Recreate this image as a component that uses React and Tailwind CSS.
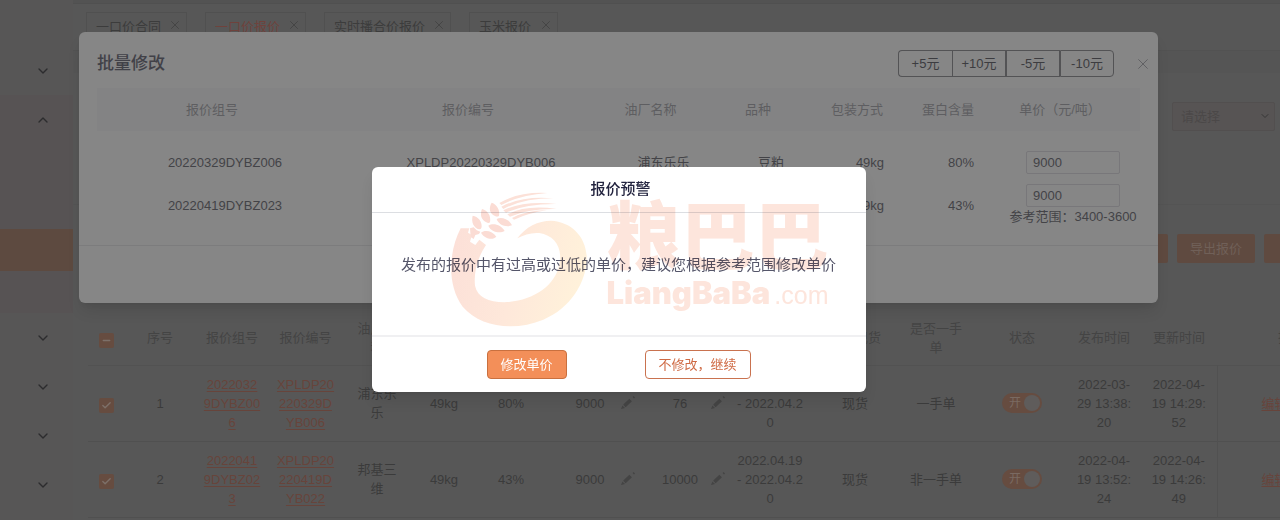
import { Fragment } from "react";
import { Check, ChevronDown, ChevronUp, Minus, X } from "lucide-react";

const tabs = [
  { name: "一口价合同", width: "w-[101px]" },
  { name: "一口价报价", width: "w-[101px]", active: true },
  { name: "实时播合价报价", width: "w-[127px]" },
  { name: "玉米报价", width: "w-[89px]" },
];

const columns = [
  { title: ["序号"], width: "w-[72px]" },
  { title: ["报价组号"], width: "w-[72px]" },
  { title: ["报价编号"], width: "w-[75px]" },
  { title: ["油厂名", "称"], width: "w-[68px]" },
  { title: ["包装方式"], width: "w-[66px]" },
  { title: ["蛋白含量"], width: "w-[68px]" },
  { title: ["单价"], width: "w-[90px]" },
  { title: ["数量"], width: "w-[90px]" },
  { title: ["提货时间"], width: "w-[90px]" },
  { title: ["是否现货"], width: "w-[80px]" },
  { title: ["是否一手", "单"], width: "w-[82px]" },
  { title: ["状态"], width: "w-[90px]" },
  { title: ["发布时间"], width: "w-[74px]" },
  { title: ["更新时间"], width: "w-[76px]" },
];

const quotes = [
  {
    id: 1,
    group: ["2022032", "9DYBZ00", "6"],
    code: ["XPLDP20", "220329D", "YB006"],
    factory: ["浦东乐", "乐"],
    pack: "49kg",
    protein: "80%",
    price: "9000",
    amount: "76",
    pickup: ["2022.04.19", "- 2022.04.2", "0"],
    spot: "现货",
    first: "一手单",
    published: ["2022-03-", "29 13:38:", "20"],
    updated: ["2022-04-", "19 14:29:", "52"],
  },
  {
    id: 2,
    group: ["2022041", "9DYBZ02", "3"],
    code: ["XPLDP20", "220419D", "YB022"],
    factory: ["邦基三", "维"],
    pack: "49kg",
    protein: "43%",
    price: "9000",
    amount: "10000",
    pickup: ["2022.04.19", "- 2022.04.2", "0"],
    spot: "现货",
    first: "非一手单",
    published: ["2022-04-", "19 13:52:", "24"],
    updated: ["2022-04-", "19 14:26:", "49"],
  },
];

const batchColumns = [
  { title: "报价组号", width: "w-[256px]" },
  { title: "报价编号", width: "w-[256px]" },
  { title: "油厂名称", width: "w-[109px]" },
  { title: "品种", width: "w-[106px]" },
  { title: "包装方式", width: "w-[92px]" },
  { title: "蛋白含量", width: "w-[90px]" },
  { title: "单价（元/吨）", width: "w-[134px]" },
];

const batchRows = [
  { cells: ["20220329DYBZ006", "XPLDP20220329DYB006", "浦东乐乐", "豆粕", "49kg", "80%"], price: "9000" },
  { cells: ["20220419DYBZ023", "XPLDP20220419DYB022", "邦基三维", "豆粕", "49kg", "43%"], price: "9000", range: "3400-3600" },
];

function Lines({ text }) {
  return text.map((line, i) => (
    <Fragment key={i}>
      {i > 0 && <br />}
      {line}
    </Fragment>
  ));
}

function Pencil() {
  return (
    <svg viewBox="0 0 14 14" className="h-[14px] w-[14px] shrink-0" fill="currentColor">
      <path d="M0 13l1.4-3.6 2.6 2.6zM2.1 8.7l6.2-6 2.6 2.6-6.2 6zM11.6 1l1-1 1.4 1.4-1 1z" />
    </svg>
  );
}

function TickBox({ label, partial }) {
  const Icon = partial ? Minus : Check;
  return (
    <label className="relative mt-1 inline-block h-[15px] w-[15px] align-middle">
      <input type="checkbox" aria-label={label} defaultChecked className="block h-[15px] w-[15px] appearance-none rounded-xs bg-[#664c40]" />
      <Icon className="pointer-events-none absolute inset-0 m-auto h-[11px] w-[11px] text-[#7d7069]" strokeWidth={3} />
    </label>
  );
}

function EditableCell({ value }) {
  return (
    <td>
      <div className="flex items-center pl-[14px]">
        <span className="flex-1">{value}</span>
        <button aria-label="修改" className="text-[#444444]">
          <Pencil />
        </button>
      </div>
    </td>
  );
}

function Sidebar() {
  return (
    <nav className="w-[73px] shrink-0 bg-[#575656] pt-[46px] text-[#2c2c2e]">
      <MenuItem label="展开" />
      <div className="bg-[#575354]">
        <MenuItem label="收起" open />
        <ul>
          <li className="h-[43px]"></li>
          <li className="h-[42px]"></li>
          <li className="h-[42px] bg-[#5d4a40]"></li>
          <li className="h-[42px]"></li>
        </ul>
      </div>
      <MenuItem label="展开" />
      <MenuItem label="展开" />
      <MenuItem label="展开" />
      <MenuItem label="展开" />
    </nav>
  );
}

function MenuItem({ label, open }) {
  const Icon = open ? ChevronUp : ChevronDown;
  return (
    <button aria-label={label} className="flex h-[49px] w-full items-center justify-end pr-[22px]">
      <Icon size={16} strokeWidth={2} />
    </button>
  );
}

function QuoteTable() {
  return (
    <div className="overflow-hidden pl-[15px]">
      <table className="w-full min-w-[1277px] table-fixed text-center text-[13px] leading-[19px] text-[#3b3b3b]">
        <thead>
          <tr className="h-[54px] border-b border-[#525252] text-[#444444]">
            <th className="w-[36px] font-normal">
              <TickBox label="全选" partial />
            </th>
            {columns.map((col) => (
              <th key={col.title[0]} className={`${col.width} font-normal`}>
                <Lines text={col.title} />
              </th>
            ))}
            <th className="w-[148px] font-normal">操作</th>
          </tr>
        </thead>
        <tbody>
          {quotes.map((quote) => (
            <tr key={quote.id} className="h-[76px] border-b border-[#505050]">
              <td>
                <TickBox label={`选择 ${quote.id}`} />
              </td>
              <td>{quote.id}</td>
              <td>
                <a href="#" className="text-[#67443b] underline underline-offset-2"><Lines text={quote.group} /></a>
              </td>
              <td>
                <a href="#" className="text-[#67443b] underline underline-offset-2"><Lines text={quote.code} /></a>
              </td>
              <td><Lines text={quote.factory} /></td>
              <td>{quote.pack}</td>
              <td>{quote.protein}</td>
              <EditableCell value={quote.price} />
              <EditableCell value={quote.amount} />
              <td><Lines text={quote.pickup} /></td>
              <td>{quote.spot}</td>
              <td>{quote.first}</td>
              <td>
                <button role="switch" aria-checked="true" className="inline-flex h-5 w-10 items-center justify-between rounded-full bg-[#664c40] pr-[2px] pl-[7px] align-middle text-xs text-[#7a6a62]">
                  开
                  <span className="h-4 w-4 rounded-full bg-[#5f5c5b]"></span>
                </button>
              </td>
              <td><Lines text={quote.published} /></td>
              <td><Lines text={quote.updated} /></td>
              <td className="border-l border-[#515151] pl-[44px] text-left">
                <a href="#" className="text-[#67443b] underline underline-offset-2">编辑</a>
              </td>
            </tr>
          ))}
        </tbody>
      </table>
    </div>
  );
}

function Watermark() {
  return (
    <div className="pointer-events-none absolute top-[18px] left-[68px] flex mix-blend-multiply">
      <svg viewBox="0 0 480 450" className="h-[150px] w-[160px]">
        <defs>
          <linearGradient id="grain" x1="0" y1="0.3" x2="1" y2="0.5">
            <stop offset="0" stopColor="#fce0d8" />
            <stop offset="0.5" stopColor="#fee8da" />
            <stop offset="1" stopColor="#fff2da" />
          </linearGradient>
        </defs>
        <path
          fill="url(#grain)"
          d="M62 130L88 130L84 143L96 150L90 170L106 180L118 164L138 180C112 218 101 262 105 302C113 340 152 354 207 351C282 344 346 302 358 238C369 187 343 151 298 144C274 142 252 149 232 160C256 126 295 107 333 107C393 110 436 153 440 212C443 288 393 370 310 404C225 439 122 428 68 365C21 301 25 202 62 130Z"
        />
        <g fill="#fbdcd4">
          <path d="M98 92C114 95 126 108 125 126Q124 134 117 133C101 128 93 112 98 92Z" />
          <path d="M126 72C143 77 154 92 150 112Q146 116 139 112C124 105 119 89 126 72Z" />
          <path d="M155 53C171 58 181 76 177 92Q173 97 165 93C149 86 145 70 155 53Z" />
          <path d="M123 143C134 133 158 137 169 155C160 165 135 164 123 143Z" />
          <path d="M145 122C160 112 184 120 194 138C180 146 153 142 145 122Z" />
          <path d="M170 102C186 94 208 104 216 121C200 128 176 121 170 102Z" />
          <path d="M90 130L101 127L110 136L121 140L117 147L106 150L101 162L92 156Z" />
        </g>
        <g fill="#fce1d8">
          <path d="M178 54Q235 20 322 24Q240 30 184 60Z" />
          <path d="M184 65Q250 31 340 40Q250 40 190 72Z" />
          <path d="M190 76Q252 46 350 57Q256 56 198 83Z" />
          <path d="M202 88Q260 58 350 72Q266 70 210 95Z" />
          <path d="M216 99Q262 75 320 76Q266 84 222 104Z" />
        </g>
      </svg>
      <div className="pl-[7px] text-[#fde5dc]">
        <div className="pt-1 font-['Noto_Sans_CJK_SC',sans-serif] text-[74px] leading-[84px] font-black">粮巴巴</div>
        <div className="flex items-baseline gap-1 leading-10">
          <span className="font-['Inter',sans-serif] text-[31px] font-black">LiangBaBa</span>
          <span className="font-['Liberation_Sans',sans-serif] text-[25px]">.com</span>
        </div>
      </div>
    </div>
  );
}

function PriceWarning() {
  return (
    <div role="alertdialog" aria-labelledby="warning-title" className="absolute top-[135px] left-1/2 w-[494px] -translate-x-1/2 rounded-md bg-white shadow-lg">
      <h2 id="warning-title" className="border-b border-[#dcdee2] pb-[2px] pl-1 text-center text-[15px] leading-[43px] font-medium text-[#23243f]">
        报价预警
      </h2>
      <p className="border-b-2 border-[#f0f0f2] pt-[30px] pb-[48px] text-center text-[15px] leading-[44px] whitespace-nowrap text-[#55566a]">
        发布的报价中有过高或过低的单价，建议您根据参考范围修改单价
      </p>
      <div className="flex justify-center gap-[78px] pt-[13px] pb-[13px] text-[13px]">
        <button className="h-[29px] w-20 rounded border border-[#c9703f] bg-[#f38f59] text-white">修改单价</button>
        <button className="h-[29px] w-[106px] rounded border border-[#c9724f] bg-white text-[#cf6a44]">不修改，继续</button>
      </div>
      <Watermark />
    </div>
  );
}

function BatchEdit() {
  return (
    <div role="dialog" aria-labelledby="batch-title" className="absolute top-8 right-[122px] left-[79px] rounded-md bg-[#868686] pb-[57px] text-[#434347] shadow-lg">
      <div className="flex items-center pt-[18px] pr-2 pl-[18px]">
        <h1 id="batch-title" className="flex-1 text-[17px] leading-[27px] font-medium text-[#414148]">批量修改</h1>
        <div className="mr-[22px] flex text-[13px] text-[#3c3c40]">
          <button className="h-[27px] w-[54px] rounded-l border border-r-0 border-[#535355]">+5元</button>
          <button className="h-[27px] w-[54px] border border-[#535355]">+10元</button>
          <button className="h-[27px] w-[54px] border border-[#535355]">-5元</button>
          <button className="h-[27px] w-[54px] rounded-r border border-[#535355]">-10元</button>
        </div>
        <button aria-label="关闭" className="text-[#535357]">
          <X size={14} strokeWidth={1} className="scale-125" />
        </button>
      </div>

      <div className="px-[18px] pt-[11px] pb-[13px]">
        <table className="w-full table-fixed text-center text-[13px]">
          <thead>
            <tr className="h-[43px] bg-[#838384] text-[#5e5e61]">
              {batchColumns.map((col) => (
                <th key={col.title} className={`${col.width} pr-[26px] font-normal whitespace-nowrap`}>
                  {col.title}
                </th>
              ))}
            </tr>
          </thead>
          <tbody className="before:block before:h-[15px]">
            {batchRows.map((row) => (
              <tr key={row.cells[0]}>
                {row.cells.map((cell, i) => (
                  <td key={i}>{cell}</td>
                ))}
                <td className="py-[5px]">
                  <input
                    aria-label={`单价 ${row.cells[0]}`}
                    defaultValue={row.price}
                    className="mx-auto block h-[23px] w-[94px] rounded-xs border border-[#78777a] px-[6px] text-[#434347]"
                  />
                  {row.range && <div className="leading-5 whitespace-nowrap">参考范围：{row.range}</div>}
                </td>
              </tr>
            ))}
          </tbody>
        </table>
      </div>
      <div className="border-t border-[#7c7c7d]"></div>

      <PriceWarning />
    </div>
  );
}

export default function App() {
  return (
    <div className="relative flex min-h-screen overflow-hidden bg-[#575757] font-['Liberation_Sans','Noto_Sans_CJK_SC',sans-serif]">
      <Sidebar />

      <main className="min-w-0 flex-1">
        <div className="h-1 border-b border-[#505050] bg-[#535353]"></div>
        <div className="flex h-[47px] gap-[18px] border-b border-[#525252] pt-2 pl-[13px]">
          {tabs.map((tab) => (
            <div key={tab.name} className={`${tab.width} flex h-[30px] items-center justify-between border border-[#505050] pr-1 pl-[9px] text-[13px]`}>
              <a href="#" className={tab.active ? "whitespace-nowrap text-[#6f423c]" : "whitespace-nowrap text-[#3c3c3c]"}>{tab.name}</a>
              <button aria-label="关闭标签" className="mb-[5px] text-[#393939]">
                <X size={14} strokeWidth={1} className="-ml-1" />
              </button>
            </div>
          ))}
        </div>

        <div className="h-[22px] bg-[#555555]"></div>
        <div className="flex h-[131px] items-start justify-end pt-[29px] pr-[5px]">
          <div className="relative">
            <select aria-label="筛选" className="h-[29px] w-[103px] appearance-none rounded-xs border border-[#524f4f] bg-[#575454] pl-2 text-[13px] text-[#4b4848]">
              <option>请选择</option>
            </select>
            <ChevronDown size={12} className="pointer-events-none absolute top-2 right-1 text-[#373737]" />
          </div>
        </div>

        <div className="flex justify-end gap-[9px] overflow-hidden border-t border-[#545454] pt-[29px] pb-12 text-[13px] text-[#706058]">
          <button className="h-[29px] w-[78px] rounded-xs bg-[#5f4a40]">新增报价</button>
          <button className="h-[29px] w-[78px] rounded-xs bg-[#5f4a40]">导出报价</button>
          <button aria-label="更多" className="h-[29px] w-4 rounded-l-xs bg-[#5f4a40]"></button>
        </div>

        <QuoteTable />
      </main>

      <BatchEdit />
    </div>
  );
}
